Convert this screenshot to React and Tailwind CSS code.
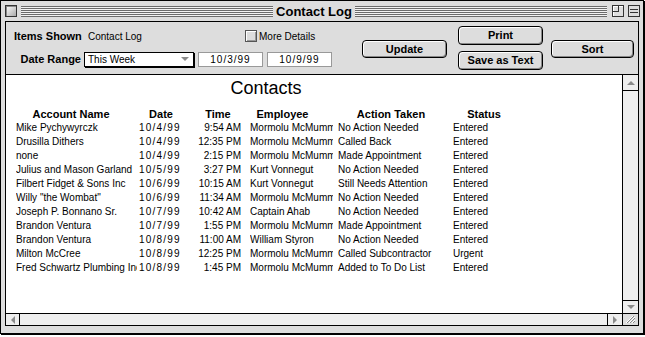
import React from "react";

const rows = [
  ["Mike Pychywyrczk", "10/4/99", "9:54 AM", "Mormolu McMummy", "No Action Needed", "Entered"],
  ["Drusilla Dithers", "10/4/99", "12:35 PM", "Mormolu McMummy", "Called Back", "Entered"],
  ["none", "10/4/99", "2:15 PM", "Mormolu McMummy", "Made Appointment", "Entered"],
  ["Julius and Mason Garland", "10/5/99", "3:27 PM", "Kurt Vonnegut", "No Action Needed", "Entered"],
  ["Filbert Fidget & Sons Inc", "10/6/99", "10:15 AM", "Kurt Vonnegut", "Still Needs Attention", "Entered"],
  ["Willy \"the Wombat\"", "10/6/99", "11:34 AM", "Mormolu McMummy", "No Action Needed", "Entered"],
  ["Joseph P. Bonnano Sr.", "10/7/99", "10:42 AM", "Captain Ahab", "No Action Needed", "Entered"],
  ["Brandon Ventura", "10/7/99", "1:55 PM", "Mormolu McMummy", "Made Appointment", "Entered"],
  ["Brandon Ventura", "10/8/99", "11:00 AM", "William Styron", "No Action Needed", "Entered"],
  ["Milton McCree", "10/8/99", "12:25 PM", "Mormolu McMummy", "Called Subcontractor", "Urgent"],
  ["Fred Schwartz Plumbing Inc", "10/8/99", "1:45 PM", "Mormolu McMummy", "Added to To Do List", "Entered"],
];

const Stripes = () => (
  <div className="flex-1 h-[11px] bg-[repeating-linear-gradient(to_bottom,#6b6b6b_0px,#6b6b6b_1px,#f2f2f2_1px,#f2f2f2_2px)]" />
);

const MacButton = ({ children, className = "" }) => (
  <button
    type="button"
    className={`flex items-center justify-center rounded-[4px] border border-black bg-[#dddddd] text-[11px] font-bold text-black shadow-[inset_1px_1px_0_#ffffff,inset_-1px_-1px_0_#888888] ${className}`}
  >
    {children}
  </button>
);

const Arrow = ({ dir }) => {
  const points = {
    up: "0,5 4,1 8,5",
    down: "0,1 4,5 8,1",
    left: "5,0 1,4 5,8",
    right: "1,0 5,4 1,8",
  }[dir];
  const size = dir === "up" || dir === "down" ? { w: 8, h: 6 } : { w: 6, h: 8 };
  return (
    <svg width={size.w} height={size.h} viewBox={`0 0 ${size.w} ${size.h}`}>
      <polygon points={points} fill="#8a8a8a" />
    </svg>
  );
};

const ContactLog = () => {
  return (
    <div className="w-[645px] h-[337px] bg-white font-['Liberation_Sans',Arial,sans-serif] text-black">
      <div className="w-[644px] h-[334px] border border-black bg-[#dddddd] flex flex-col shadow-[1px_1px_0_#000]">
        {/* title bar */}
        <div className="h-[20px] flex items-center pl-[4px] pr-[3px]">
          <div className="w-[12px] h-[12px] border border-[#333] bg-[linear-gradient(135deg,#fff,#aaa)] shadow-[inset_1px_1px_0_#888]" />
          <div className="flex-1 flex items-center ml-[4px]">
            <Stripes />
            <span className="px-[3px] text-[13px] font-bold leading-none">Contact Log</span>
            <Stripes />
          </div>
          <div className="ml-[5px] w-[12px] h-[12px] border border-[#333] bg-[#ddd] shadow-[inset_1px_1px_0_#fff]">
            <div className="w-[6px] h-[6px] border-r border-b border-[#333]" />
          </div>
          <div className="ml-[4px] w-[12px] h-[12px] border border-[#333] bg-[#ddd] flex flex-col justify-center gap-[2px] px-[1px]">
            <div className="h-px bg-[#333]" />
            <div className="h-px bg-[#333]" />
          </div>
        </div>

        {/* content frame */}
        <div className="mx-[4px] h-[305px] border border-black flex flex-col">
          {/* toolbar */}
          <div className="h-[53px] border-b border-black flex items-start">
            <div className="pl-[8px] pt-[8px]">
              <div className="h-[12px] flex items-center">
                <span className="w-[74px] text-[11px] font-bold">Items Shown</span>
                <span className="w-[157px] text-[10px]">Contact Log</span>
                <span className="w-[12px] h-[12px] border border-[#555] bg-[#dddddd] shadow-[inset_1px_1px_0_#fff,inset_-1px_-1px_0_#999]" />
                <span className="ml-[2px] text-[10px]">More Details</span>
              </div>
              <div className="mt-[9px] h-[16px] flex items-center">
                <span className="w-[70px] pr-[3px] text-right text-[11px] font-bold">Date Range</span>
                <div className="w-[110px] h-[15px] border border-black bg-white shadow-[1px_1px_0_#000] flex items-center justify-between pl-[3px] pr-[4px] text-[10px]">
                  <span>This Week</span>
                  <Arrow dir="down" />
                </div>
                <div className="ml-[4px] w-[65px] h-[15px] border border-[#999] bg-white flex items-center justify-center text-[10px] tracking-[1px]">10/3/99</div>
                <div className="ml-[4px] w-[65px] h-[15px] border border-[#999] bg-white flex items-center justify-center text-[10px] tracking-[1px]">10/9/99</div>
              </div>
            </div>
            <MacButton className="ml-[30px] mt-[18px] w-[85px] h-[18px]">Update</MacButton>
            <div className="ml-[11px] mt-[4px] flex flex-col gap-[6px]">
              <MacButton className="w-[85px] h-[19px]">Print</MacButton>
              <MacButton className="w-[85px] h-[19px]">Save as Text</MacButton>
            </div>
            <MacButton className="ml-[8px] mt-[18px] w-[83px] h-[18px]">Sort</MacButton>
          </div>

          {/* list + vertical scrollbar */}
          <div className="flex-1 flex min-h-0">
            <div className="flex-1 bg-white pl-[10px]">
              <div className="w-[500px]">
                <div className="pt-[3px] h-[32px] text-center text-[18px] leading-[20px]">Contacts</div>
                <div className="grid grid-cols-[110px_70px_44px_85px_132px_54px] h-[14px] text-[11px] font-bold leading-[14px] text-center">
                  <span>Account Name</span>
                  <span>Date</span>
                  <span>Time</span>
                  <span>Employee</span>
                  <span>Action Taken</span>
                  <span>Status</span>
                </div>
                {rows.map((r, i) => (
                  <div key={i} className="flex h-[14px] text-[10px] leading-[14px] whitespace-nowrap">
                    <span className="w-[121px] overflow-hidden">{r[0]}</span>
                    <span className="ml-[2px] w-[46px] tracking-[1.2px]">{r[1]}</span>
                    <span className="w-[56px] text-right">{r[2]}</span>
                    <span className="ml-[9px] w-[83px] overflow-hidden">{r[3]}</span>
                    <span className="ml-[5px] w-[115px]">{r[4]}</span>
                    <span>{r[5]}</span>
                  </div>
                ))}
              </div>
            </div>
            <div className="w-[16px] border-l border-black bg-[#eeeeee] flex flex-col">
              <div className="h-[16px] border-b border-black flex items-center justify-center">
                <Arrow dir="up" />
              </div>
              <div className="flex-1" />
              <div className="h-[13px] border-t border-black flex items-center justify-center">
                <Arrow dir="down" />
              </div>
            </div>
          </div>

          {/* horizontal scrollbar */}
          <div className="h-[12px] border-t border-black bg-[#eeeeee] flex">
            <div className="w-[14px] border-r border-black flex items-center justify-center">
              <Arrow dir="left" />
            </div>
            <div className="flex-1" />
            <div className="w-[15px] border-l border-black flex items-center justify-center">
              <Arrow dir="right" />
            </div>
            <div className="w-[16px] border-l border-black bg-[#dddddd] flex items-center justify-center">
              <svg width="11" height="9" viewBox="0 0 11 9">
                <path d="M1 8 L8 1 M4 8 L10 2 M7 8 L10 5" stroke="#ffffff" strokeWidth="1" />
                <path d="M2 8 L9 1 M5 8 L10 3 M8 8 L10 6" stroke="#888888" strokeWidth="1" />
              </svg>
            </div>
          </div>
        </div>
      </div>
    </div>
  );
};

export default ContactLog;
